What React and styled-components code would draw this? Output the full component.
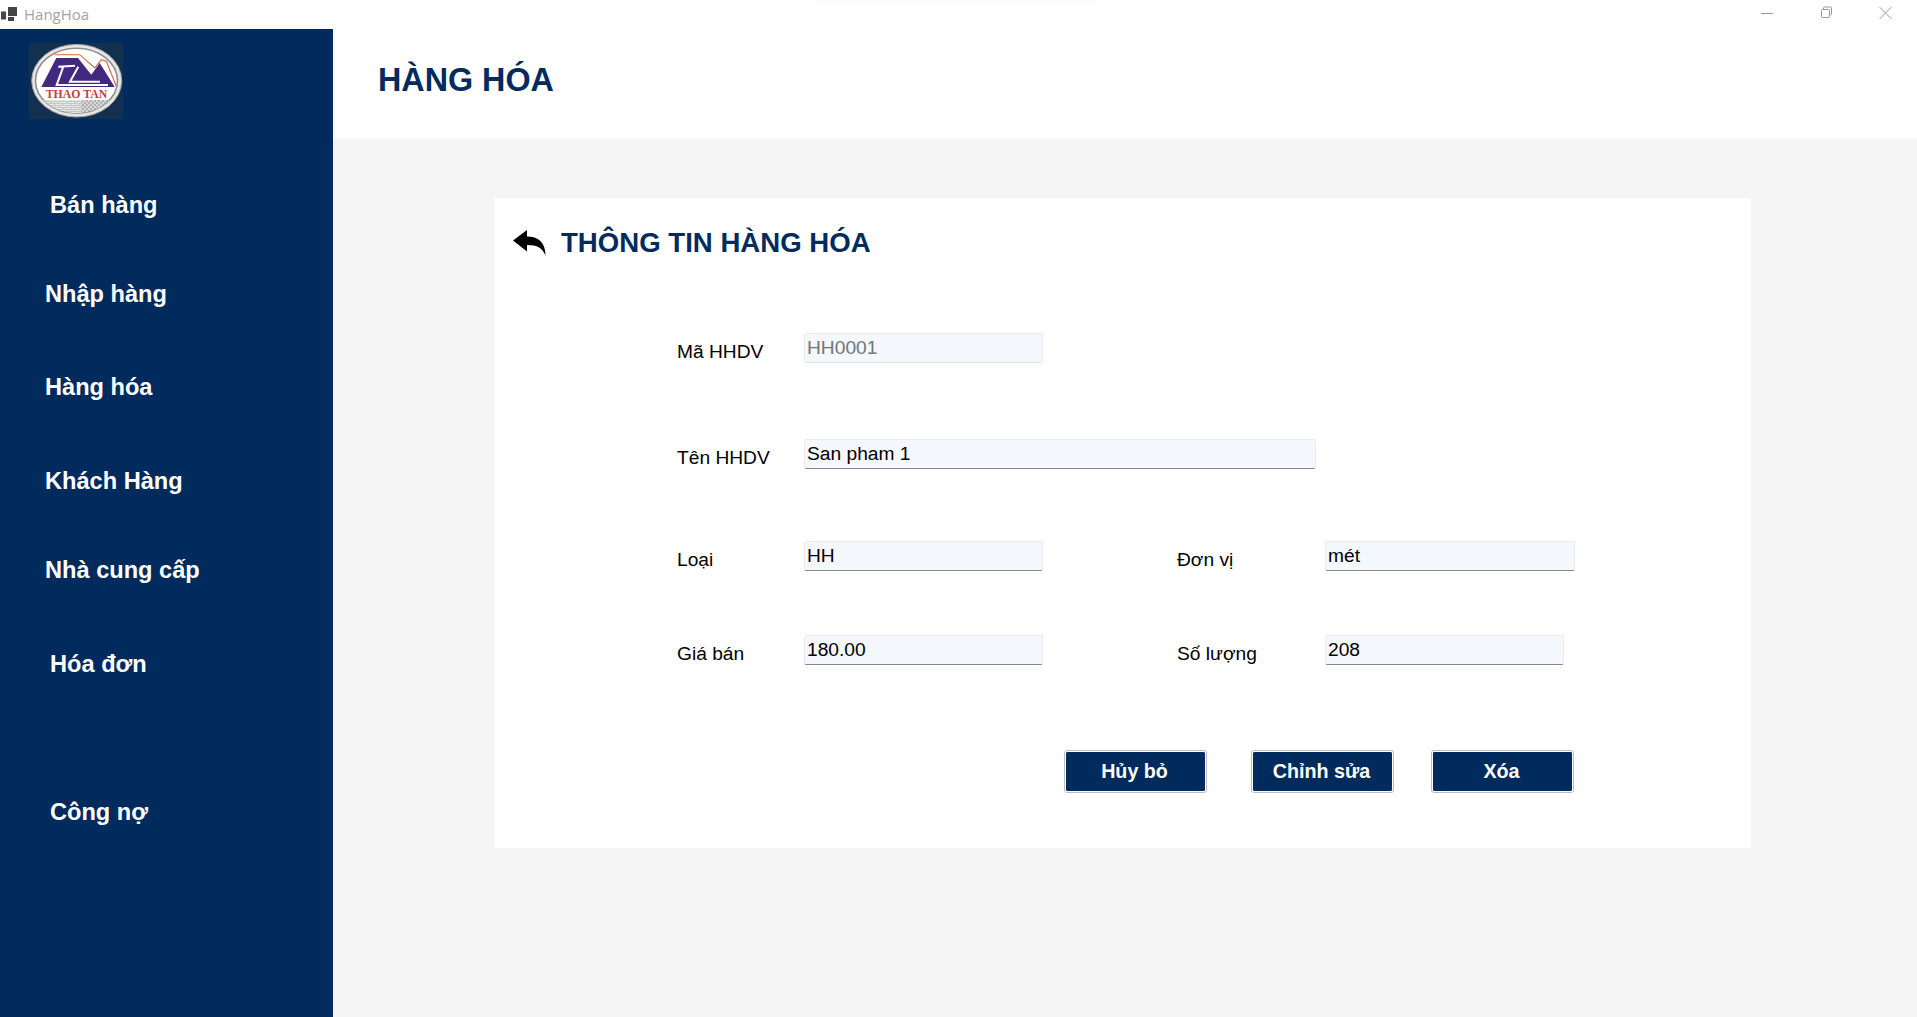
import React from 'react';
import styled, { createGlobalStyle } from 'styled-components';

const GlobalStyle = createGlobalStyle`
  html, body {
    margin: 0;
    padding: 0;
    height: 100%;
    overflow: hidden;
    background: #fff;
    font-family: "Liberation Sans", Arial, sans-serif;
  }
  #root {
    height: 100%;
  }
`;

const Window = styled.div`
  width: 1917px;
  height: 1017px;
  display: flex;
  flex-direction: column;
`;

const TitleBar = styled.div`
  position: relative;
  height: 29px;
  flex: none;
  display: flex;
  align-items: center;
  background: #fff;
  padding-left: 1px;
`;

// faint shadow of another window that lies over the title bar
const TopShadow = styled.div`
  position: absolute;
  top: 0;
  left: 815px;
  width: 280px;
  height: 4px;
  background: linear-gradient(#fafafa, #fff);
`;

const TitleText = styled.span`
  margin: -2px 0 0 7px;
  font-family: "Open Sans", sans-serif;
  font-size: 15px;
  color: #a3a3a3;
`;

const WindowControls = styled.div`
  margin-left: auto;
  margin-right: 25px;
  display: flex;
  gap: 46px;
  height: 29px;
  align-items: flex-start;
  padding-top: 6px;
  box-sizing: border-box;
`;

const Body = styled.div`
  flex: 1;
  display: flex;
  min-height: 0;
`;

const Sidebar = styled.aside`
  width: 333px;
  flex: none;
  background: #002b5c;
  padding: 14px 0 0 29px;
  box-sizing: border-box;
`;

const Nav = styled.nav`
  display: flex;
  flex-direction: column;
`;

const NavItem = styled.a`
  font-size: 23.6px;
  font-weight: bold;
  line-height: 28px;
  color: #fff;
  margin-top: ${p => p.$top}px;
  margin-left: ${p => p.$indent}px;
`;

const Main = styled.main`
  flex: 1;
  display: flex;
  flex-direction: column;
  background: #f5f5f5;
`;

const PageHeader = styled.header`
  height: 110px;
  flex: none;
  background: #fff;
  display: flex;
  align-items: center;
  padding: 0 0 8px 45px;
  box-sizing: border-box;
`;

const PageTitle = styled.h1`
  margin: 0;
  font-size: 32.3px;
  font-weight: bold;
  color: #002b5c;
`;

const Card = styled.section`
  width: 1257px;
  height: 650px;
  margin: 59px 0 0 161px;
  background: #fff;
  padding: 29px 0 0 19px;
  box-sizing: border-box;
`;

const CardHeader = styled.div`
  display: flex;
  align-items: center;
  gap: 15px;
`;

const CardTitle = styled.h2`
  margin: 0;
  font-size: 27.6px;
  line-height: 32px;
  font-weight: bold;
  color: #002b5c;
`;

const Form = styled.form`
  margin-left: 164px;
`;

const Row = styled.div`
  display: flex;
  align-items: flex-start;
  margin-top: ${p => p.$top}px;
`;

const Label = styled.label`
  width: ${p => p.$width}px;
  flex: none;
  font-size: 19.2px;
  line-height: 22px;
  margin-top: 8px;
  color: #000;
`;

const Field = styled.div`
  width: ${p => p.$width}px;
  height: 30px;
  flex: none;
  box-sizing: border-box;
  background: #f4f7fb;
  border: 1px solid #ebebeb;
  border-bottom: 1px solid ${p => (p.$disabled ? '#e2e2e2' : '#8a8a8a')};
  border-radius: 2px;
  padding: 2px 0 0 2px;
  font-size: 19.2px;
  line-height: 24px;
  color: ${p => (p.$disabled ? '#757575' : '#000')};
`;

const Spacer = styled.div`
  width: 134px;
  flex: none;
`;

const Actions = styled.div`
  display: flex;
  margin: 85px 0 0 387px;
`;

const ActionButton = styled.button`
  width: ${p => p.$width}px;
  height: 43px;
  margin-right: ${p => p.$gap}px;
  padding: 0 2px 0 0;
  box-sizing: border-box;
  border: 2px solid #fff;
  outline: 1px solid #bdbdbd;
  outline-offset: -1px;
  border-radius: 3px;
  background: #002b5c;
  background-clip: padding-box;
  color: #fff;
  font-family: inherit;
  font-size: 19.7px;
  font-weight: bold;
`;

const AppIcon = () => (
  <svg width="16" height="16" viewBox="0 0 16 16">
    <rect x="7" y="0" width="9" height="9" fill="#444" />
    <rect x="0" y="4.5" width="5" height="8" fill="#444" />
    <rect x="7" y="10" width="6" height="4" fill="#444" />
  </svg>
);

const MinimizeIcon = () => (
  <svg width="13" height="13" viewBox="0 0 13 13">
    <path d="M0 7.5h12" stroke="#9a9a9a" fill="none" />
  </svg>
);

const RestoreIcon = () => (
  <svg width="13" height="13" viewBox="0 0 13 13">
    <rect x="1.5" y="3.5" width="8" height="8" rx="1" stroke="#9a9a9a" fill="none" />
    <path d="M3.5 3V2a1 1 0 0 1 1-1h6a1 1 0 0 1 1 1v6a1 1 0 0 1-1 1" stroke="#9a9a9a" fill="none" />
  </svg>
);

const CloseIcon = () => (
  <svg width="13" height="13" viewBox="0 0 13 13">
    <path d="M0.5 1l12 12M12.5 1l-12 12" stroke="#9a9a9a" fill="none" />
  </svg>
);

const ReplyIcon = () => (
  <svg width="33" height="26" viewBox="0 0 33 26">
    <path
      d="M0 10.5L14 0v6.5C25 6.5 32.5 12 32.5 26 30 18 24 15 14 15v6.5z"
      fill="#000"
    />
  </svg>
);

const Logo = () => (
  <svg width="94" height="76" viewBox="0 0 94 76">
    <defs>
      <clipPath id="logoInner">
        <ellipse cx="47.5" cy="37.7" rx="41" ry="32.5" />
      </clipPath>
      <pattern id="brick" width="8" height="4" patternUnits="userSpaceOnUse">
        <rect width="8" height="4" fill="#e6e6e6" />
        <path d="M0 .5h8M0 2.5h8M2 .5v2M6 2.5v2" stroke="#b5b5b5" strokeWidth=".6" />
      </pattern>
      <pattern id="hatch" width="4" height="4" patternUnits="userSpaceOnUse">
        <rect width="4" height="4" fill="#d8d8d8" />
        <path d="M0 0l4 4M4 0L0 4" stroke="#a0a0a0" strokeWidth=".7" />
      </pattern>
    </defs>
    <rect width="94" height="76" fill="#14304f" />
    <ellipse cx="47.7" cy="37.7" rx="45" ry="36.3" fill="#e6e6e6" stroke="#a5a5a5" strokeWidth="1" />
    <ellipse cx="47.5" cy="37.7" rx="41" ry="32.5" fill="#fff" stroke="#8f8f8f" strokeWidth="1.6" />
    <path d="M25.7 11.7h25l15 13.3 6.6-8.3 5 1.6 10 25" fill="none" stroke="#d9653f" strokeWidth="1.1" />
    <path d="M12.3 44L27.3 15H49l13.3 16.7L70.7 20l15 24z" fill="#43287f" />
    <path d="M29.3 23.7L46 22.7M34.3 23.7L27.7 42H79M49.3 23.7L41 38.7h30" fill="none" stroke="#fff" strokeWidth="2" />
    <text x="47.5" y="54.5" textAnchor="middle" fontFamily="Liberation Serif, serif" fontWeight="bold" fontSize="11.8" fill="#c4403a">
      THAO TAN
    </text>
    <g clipPath="url(#logoInner)">
      <rect x="5" y="57" width="47" height="15" fill="url(#brick)" />
      <rect x="52" y="57" width="38" height="15" fill="url(#hatch)" />
    </g>
  </svg>
);

const navItems = [
  { label: 'Bán hàng', top: 68, indent: 21 },
  { label: 'Nhập hàng', top: 61, indent: 16 },
  { label: 'Hàng hóa', top: 65, indent: 16 },
  { label: 'Khách Hàng', top: 66, indent: 16 },
  { label: 'Nhà cung cấp', top: 61, indent: 16 },
  { label: 'Hóa đơn', top: 66, indent: 21 },
  { label: 'Công nợ', top: 120, indent: 21 },
];

const App = () => {
  return (
    <Window>
      <GlobalStyle />
      <TitleBar>
        <TopShadow />
        <AppIcon />
        <TitleText>HangHoa</TitleText>
        <WindowControls>
          <MinimizeIcon />
          <RestoreIcon />
          <CloseIcon />
        </WindowControls>
      </TitleBar>
      <Body>
        <Sidebar>
          <Logo />
          <Nav>
            {navItems.map(item => (
              <NavItem key={item.label} $top={item.top} $indent={item.indent}>
                {item.label}
              </NavItem>
            ))}
          </Nav>
        </Sidebar>
        <Main>
          <PageHeader>
            <PageTitle>HÀNG HÓA</PageTitle>
          </PageHeader>
          <Card>
            <CardHeader>
              <ReplyIcon />
              <CardTitle>THÔNG TIN HÀNG HÓA</CardTitle>
            </CardHeader>
            <Form>
              <Row $top={74}>
                <Label $width={127}>Mã HHDV</Label>
                <Field $width={239} $disabled>HH0001</Field>
              </Row>
              <Row $top={76}>
                <Label $width={127}>Tên HHDV</Label>
                <Field $width={512}>San pham 1</Field>
              </Row>
              <Row $top={72}>
                <Label $width={127}>Loại</Label>
                <Field $width={239}>HH</Field>
                <Spacer />
                <Label $width={148}>Đơn vị</Label>
                <Field $width={250}>mét</Field>
              </Row>
              <Row $top={64}>
                <Label $width={127}>Giá bán</Label>
                <Field $width={239}>180.00</Field>
                <Spacer />
                <Label $width={148}>Số lượng</Label>
                <Field $width={239}>208</Field>
              </Row>
              <Actions>
                <ActionButton type="button" $width={143} $gap={44}>Hủy bỏ</ActionButton>
                <ActionButton type="button" $width={143} $gap={37}>Chỉnh sửa</ActionButton>
                <ActionButton type="button" $width={143} $gap={0}>Xóa</ActionButton>
              </Actions>
            </Form>
          </Card>
        </Main>
      </Body>
    </Window>
  );
};

export default App;
